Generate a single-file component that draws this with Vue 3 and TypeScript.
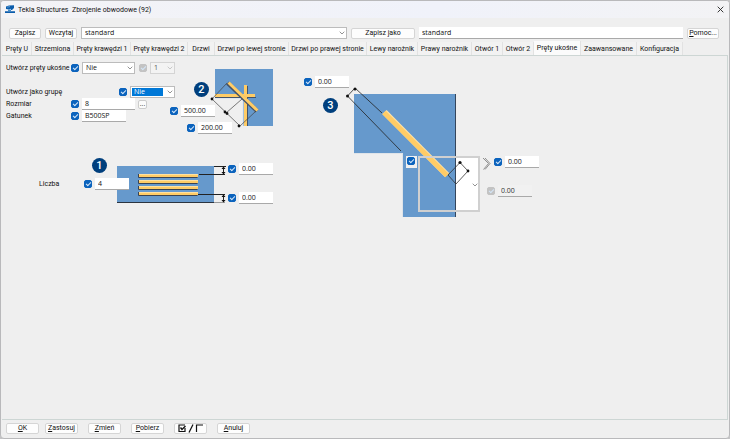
<script setup lang="ts">
import { reactive, ref } from 'vue'

const tabs = [
  'Pręty U', 'Strzemiona', 'Pręty krawędzi 1', 'Pręty krawędzi 2', 'Drzwi',
  'Drzwi po lewej stronie', 'Drzwi po prawej stronie', 'Lewy narożnik',
  'Prawy narożnik', 'Otwór 1', 'Otwór 2', 'Pręty ukośne', 'Zaawansowane', 'Konfiguracja',
]
const activeTab = ref('Pręty ukośne')
const form = reactive({
  preset: 'standard', saveAs: 'standard', create: 'Nie', method: '1', group: 'Nie',
  size: '8', grade: 'B500SP', lengthA: '500.00', spacing: '200.00', count: '4',
  coverTop: '0.00', coverBottom: '0.00', offset: '0.00', endOffset: '0.00', endAngle: '0.00',
})
const on = reactive({
  create: true, method: true, group: true, size: true, grade: true, lengthA: true,
  spacing: true, count: true, coverTop: true, coverBottom: true, offset: true,
  endType: true, endOffset: true, endAngle: true,
})
const barRows = [19, 25, 31, 37]
</script>

<template>
  <main class="window">
    <header class="titlebar">
      <svg class="logo" viewBox="0 0 10 9" aria-hidden="true">
        <path d="M1 1.5 4 .5 9 .3V3L7 5H6V3.8L4 4.6 1 4Z" fill="#0b5cab" />
        <path d="M3 4.5h3V6H3z" fill="#3f8dcd" />
        <path d="M0 6.2h10V8H0z" fill="#0b5cab" />
        <path d="M2 2.2 5 1.6" stroke="#8cc4ee" stroke-width=".6" />
      </svg>
      <h1>Tekla Structures&nbsp; Zbrojenie obwodowe (92)</h1>
      <button class="close" type="button" aria-label="Zamknij">
        <svg viewBox="0 0 7 7"><path d="M.7.7 6.3 6.3M6.3.7.7 6.3" stroke="#222" stroke-width=".9" /></svg>
      </button>
    </header>

    <section class="toolbar">
      <button class="btn" type="button">Zapisz</button>
      <button class="btn" type="button">Wczytaj</button>
      <span class="combo preset">
        <select v-model="form.preset" aria-label="Ustawienia"><option>standard</option></select>
        <svg viewBox="0 0 6 4"><path d="M.7.7 3 3 5.3.7" /></svg>
      </span>
      <button class="btn save-as" type="button">Zapisz jako</button>
      <input v-model="form.saveAs" class="field name" aria-label="Nazwa">
      <button class="btn help" type="button"><u>P</u>omoc...</button>
    </section>

    <nav class="tabs" role="tablist">
      <button
        v-for="tab in tabs" :key="tab" type="button" role="tab" class="tab"
        :class="{ active: tab === activeTab }" :aria-selected="tab === activeTab"
        @click="activeTab = tab"
      >{{ tab }}</button>
    </nav>

    <section class="panel">
      <div class="left">
        <div class="top">
          <form class="form" @submit.prevent>
            <div class="row first">
              <label for="create">Utwórz pręty ukośne</label>
              <input v-model="on.create" type="checkbox" aria-label="Użyj: pręty ukośne">
              <span class="combo wide">
                <select id="create" v-model="form.create"><option>Nie</option><option>Tak</option></select>
                <svg viewBox="0 0 6 4"><path d="M.7.7 3 3 5.3.7" /></svg>
              </span>
              <input v-model="on.method" class="push" type="checkbox" disabled aria-label="Użyj: typ">
              <span class="combo small off">
                <select v-model="form.method" disabled aria-label="Typ"><option>1</option></select>
                <svg viewBox="0 0 6 4"><path d="M.7.7 3 3 5.3.7" /></svg>
              </span>
            </div>
            <div class="row">
              <label for="group">Utwórz jako grupę</label>
              <input v-model="on.group" class="push" type="checkbox" aria-label="Użyj: grupa">
              <span class="combo medium focused">
                <select id="group" v-model="form.group"><option>Nie</option><option>Tak</option></select>
                <svg viewBox="0 0 6 4"><path d="M.7.7 3 3 5.3.7" /></svg>
              </span>
            </div>
            <div class="row">
              <label for="size">Rozmiar</label>
              <input v-model="on.size" type="checkbox" aria-label="Użyj: rozmiar">
              <input id="size" v-model="form.size" class="field wide">
              <button class="more" type="button">...</button>
            </div>
            <div class="row">
              <label for="grade">Gatunek</label>
              <input v-model="on.grade" type="checkbox" aria-label="Użyj: gatunek">
              <input id="grade" v-model="form.grade" class="field medium">
            </div>
          </form>

          <figure class="fig cross">
            <svg viewBox="0 0 106 74">
              <path d="M46 7h58v57H74V36H46z" fill="#6699cc" />
              <path d="M46 36.500h28V64" fill="none" stroke="#dfe6ee" />
              <path d="M46 35.500h41M78.500 24v40" stroke="#43536a" />
              <path d="M46 33.500h40" stroke="#ffcc66" stroke-width="3" />
              <path d="M76.500 23v41" stroke="#ffcc66" stroke-width="3" />
              <path d="M58.500 21 88 49" stroke="#43536a" stroke-width="4" />
              <path d="M59.500 20.500 88.500 48.500" stroke="#ffcc66" stroke-width="3" />
              <path d="M58 21 43 37 71 64 87 49M73 37 57 51" fill="none" stroke="#444" stroke-width=".7" />
              <g fill="#111"><circle cx="43" cy="37" r="1.400" /><circle cx="56" cy="50" r="1.400" /><circle cx="58" cy="51.500" r="1.400" /><circle cx="70" cy="64" r="1.400" /></g>
            </svg>
            <span class="badge">2</span>
            <div class="pair p-length"><input v-model="on.lengthA" type="checkbox" aria-label="Użyj: długość"><input v-model="form.lengthA" class="field" aria-label="Długość"></div>
            <div class="pair p-spacing"><input v-model="on.spacing" type="checkbox" aria-label="Użyj: rozstaw"><input v-model="form.spacing" class="field" aria-label="Rozstaw"></div>
          </figure>
        </div>

        <figure class="fig stack">
          <svg viewBox="0 0 240 50">
            <path d="M81 11h97v36H81z" fill="#6699cc" />
            <path d="M81 47.500h97" stroke="#2b3440" />
            <path d="M178 47.500h11" stroke="#999" />
            <g v-for="y in barRows" :key="y">
              <path :d="`M102.500 ${y}v3.500h59`" fill="none" stroke="#3b4351" />
              <path :d="`M103 ${y + 1.5}h59`" stroke="#ffcc66" stroke-width="3" />
              <path :d="`M103 ${y + .5}h59`" stroke="#ffe0a0" />
            </g>
            <path d="M178 11.500h12M163 19.500h26M162 39.500h27M187.500 12v7M187.500 40v7" stroke="#222" />
            <path d="M187.500 11.500l2 2.500h-4zM187.500 19.500l2-2.500h-4zM187.500 39.500l2 2.500h-4zM187.500 47.500l2-2.500h-4z" fill="#111" />
          </svg>
          <span class="badge">1</span>
          <div class="pair p-count">
            <label for="count">Liczba</label>
            <input v-model="on.count" type="checkbox" aria-label="Użyj: liczba"><input id="count" v-model="form.count" class="field">
          </div>
          <div class="pair p-top"><input v-model="on.coverTop" type="checkbox" aria-label="Użyj: otulina górna"><input v-model="form.coverTop" class="field" aria-label="Otulina górna"></div>
          <div class="pair p-bottom"><input v-model="on.coverBottom" type="checkbox" aria-label="Użyj: otulina dolna"><input v-model="form.coverBottom" class="field" aria-label="Otulina dolna"></div>
        </figure>
      </div>

      <figure class="fig corner">
        <svg viewBox="0 0 246 150">
          <path d="M54 24h102v123h-53V83H54z" fill="#6699cc" />
          <path d="M54 83.500h49M102.500 84v63" fill="none" stroke="#dfe4e9" />
          <path d="M155.500 24v123" stroke="#35465c" />
          <path d="M156 87h23v54h-23z" fill="#fff" />
          <path d="M84.500 42 147 105" stroke="#ffe3a8" stroke-width="6" />
          <path d="M84 42.500 147 105.500" stroke="#ffcc66" stroke-width="5" />
          <path d="M82 43 55 18 47.500 26 101 81" fill="none" stroke="#222" stroke-width=".8" />
          <path d="M148 105 160 92.500 168 101 156 114Z" fill="none" stroke="#333" stroke-width=".8" />
          <g fill="#111"><circle cx="55" cy="19" r="1.500" /><circle cx="47.500" cy="26" r="1.500" /><circle cx="160" cy="92.500" r="1.600" /><circle cx="168" cy="101" r="1.400" /></g>
          <path d="M183 88 188.500 93.500 183.500 99.500M185 88 190 93.500 185 99.500" fill="none" stroke="#777" stroke-width=".8" />
        </svg>
        <span class="badge">3</span>
        <div class="pair p-offset"><input v-model="on.offset" type="checkbox" aria-label="Użyj: odsunięcie"><input v-model="form.offset" class="field" aria-label="Odsunięcie"></div>
        <span class="check-plate"><input v-model="on.endType" type="checkbox" aria-label="Użyj: typ zakończenia"></span>
        <span class="combo picture">
          <select aria-label="Typ zakończenia"><option label=" " /></select>
          <svg viewBox="0 0 6 4"><path d="M.7.7 3 3 5.3.7" /></svg>
        </span>
        <div class="pair p-end"><input v-model="on.endOffset" type="checkbox" aria-label="Użyj: przedłużenie"><input v-model="form.endOffset" class="field" aria-label="Przedłużenie"></div>
        <div class="pair p-angle"><input v-model="on.endAngle" type="checkbox" disabled aria-label="Użyj: hak"><input v-model="form.endAngle" class="field" disabled aria-label="Hak"></div>
      </figure>
    </section>

    <footer class="footer">
      <button class="btn ok" type="button"><u>O</u>K</button>
      <button class="btn" type="button"><u>Z</u>astosuj</button>
      <button class="btn" type="button"><u>Z</u>mień</button>
      <button class="btn" type="button"><u>P</u>obierz</button>
      <button class="btn" type="button" aria-label="Przełącz zaznaczenie">
        <svg viewBox="0 0 26 9">
          <path d="M7 1H1v6.500h6V4" fill="none" stroke="#111" stroke-width="1.200" />
          <path d="M2.500 3.500 4 5.500 7.500 2" fill="none" stroke="#111" stroke-width="1.400" />
          <path d="M15 .5 11 8.500" stroke="#111" stroke-width="1.200" />
          <path d="M25 1h-6.500v7" fill="none" stroke="#111" stroke-width="1.200" />
        </svg>
      </button>
      <button class="btn" type="button"><u>A</u>nuluj</button>
    </footer>
  </main>
</template>

<style>
html, body, #app { height: 100%; }
body { margin: 0; background: #c4c4c6; }
</style>

<style scoped>
* { box-sizing: border-box; }
.window {
  height: 100%; display: flex; flex-direction: column;
  background: #efefef; border: 1px solid #b9b9bb; border-radius: 4px; overflow: hidden;
  font: 7px/10px Roboto, "Open Sans", sans-serif; color: #111;
}
button, input, select { font: inherit; color: inherit; margin: 0; }
h1, figure { margin: 0; }
svg { display: block; }

.titlebar {
  display: flex; align-items: center; gap: 3px; height: 17px; padding: 0 5px 0 4px;
  background: linear-gradient(90deg, #f3f3f6, #f0f2fa 60%, #f3f3f5);
}
.logo { width: 10px; height: 9px; }
h1 { flex: 1; font: inherit; }
.close { border: 0; padding: 0; background: none; }
.close svg { width: 7px; height: 7px; }

.toolbar { display: flex; align-items: center; gap: 4px; padding: 9px 10px 3px 8px; }
.btn {
  height: 11px; width: 32px; padding: 0; background: #fdfdfd; line-height: 9px;
  border: 1px solid #d5d5d5; border-radius: 2px; white-space: nowrap;
}
.btn svg { width: 26px; height: 9px; margin: 0 auto; }
.save-as { width: 64px; }
.field, .combo select { font-family: "Open Sans", "Noto Sans", sans-serif; }
.field {
  width: 34px; height: 12px; padding: 0 3px; border: 0;
  border-bottom: 1px solid #a9a9a9; background: #fff; border-radius: 0; outline: 0;
}
.field:disabled { background: #f1f1f1; color: #333; }
.field.wide { width: 53px; }
.field.medium { width: 44px; }
.field.name { flex: 260 1 0; width: 0; }

.combo { position: relative; display: block; height: 12px; }
.combo select {
  appearance: none; display: block; width: 100%; height: 100%; padding: 0 3px;
  border: 1px solid #bcbcbc; border-radius: 0; background: #fff; outline: 0;
}
.combo svg { position: absolute; right: 2px; top: 4px; width: 6px; height: 4px; pointer-events: none; }
.combo path { fill: none; stroke: #777; stroke-width: .8; }
.combo.preset { flex: 268 1 0; }
.combo.wide { width: 53px; }
.combo.medium { width: 45px; }
.combo.small { width: 25px; }
.combo.off select { background: #f3f3f3; border-color: #d4d4d4; color: #555; opacity: 1; }
.combo.off path { stroke: #bbb; }
.combo.focused select {
  color: #fff; background: linear-gradient(#0078d7, #0078d7) 1px 1px / 31px 8px no-repeat #fff;
}

.tabs {
  display: grid; height: 13px; padding-left: 2px;
  grid-template-columns: 29px 42px 57px 57px 27px 74px 78px 51px 54px 31px 31px 47px 56px 46px;
}
.tab {
  padding: 0; border: 0; border-right: 1px solid #e2e2e2; background: #f2f2f2;
  line-height: 10px; white-space: nowrap; display: flex; justify-content: center; align-items: center;
}
.tab.active { background: #fbfbfb; margin-top: -1px; }

.panel {
  flex: 1; display: flex; align-items: flex-start; margin: 0 1px;
  border: 1px solid #cdd6d4; border-width: 1px 1px 1px 0;
}
.left { width: 298px; }
.top { display: flex; }
.form { width: 173px; padding: 6px 0 0 4px; }
.row { display: flex; align-items: center; gap: 3px; height: 12px; }
.row.first { margin-bottom: 12px; }
.row label { width: 62px; white-space: nowrap; }
.push { margin-left: auto; }
.more { width: 9px; height: 9px; padding: 0; line-height: 5px; border: 1px solid #ccc; border-radius: 2px; background: #fbfbfb; }

input[type="checkbox"] {
  appearance: none; flex: none; width: 8px; height: 8px; border-radius: 2px; border: 1px solid #888; background: #fff;
  display: grid; place-items: center;
}
input[type="checkbox"]:checked { background: #0b63bd; border-color: #0b63bd; }
input[type="checkbox"]:checked::after {
  content: ""; width: 4px; height: 2px; border: solid #d4e6f8; border-width: 0 0 1px 1px; rotate: -45deg; translate: 0 -1px;
}
input[type="checkbox"]:checked:disabled { background: #c3c3c3; border-color: #c3c3c3; }

.fig { position: relative; }
.badge {
  position: absolute; width: 15px; height: 15px; border-radius: 50%; background: #003f7d;
  color: #fff; font-size: 11px; line-height: 15px; font-weight: 500; text-align: center;
}
.pair { position: absolute; display: flex; align-items: center; gap: 3px; }
.cross { margin-left: -6px; }
.cross > svg { width: 106px; height: 74px; margin-top: 6px; }
.cross .badge { left: 25px; top: 26px; }
.p-length { left: 1px; top: 49px; }
.p-spacing { left: 18px; top: 66px; }
.stack { margin: 19px 0 0 34px; }
.stack > svg { width: 240px; height: 50px; }
.stack .badge { left: 56px; top: 3px; }
.p-count { left: 3px; top: 23px; }
.p-count label { width: 42px; }
.p-top { left: 192px; top: 8px; }
.p-bottom { left: 192px; top: 37px; }
.corner { margin-top: 14px; }
.corner > svg { width: 246px; height: 150px; }
.corner .badge { left: 23px; top: 28px; }
.p-offset { left: 4px; top: 6px; }
.check-plate { position: absolute; left: 106px; top: 86px; padding: 1px; width: 11px; height: 12px; background: #f0f0f0; }
.combo.picture { position: absolute; left: 118px; top: 86px; width: 62px; height: 56px; }
.combo.picture select { background: none; border: 2px solid #d0d0d0; }
.combo.picture svg { top: 27px; }
.p-end { left: 194px; top: 86px; }
.p-angle { left: 187px; top: 115px; }

.footer { display: flex; gap: 10px; padding: 3px 5px 4px; }
.footer .btn { width: 33px; }
.footer .ok { margin-right: -4px; }
</style>
